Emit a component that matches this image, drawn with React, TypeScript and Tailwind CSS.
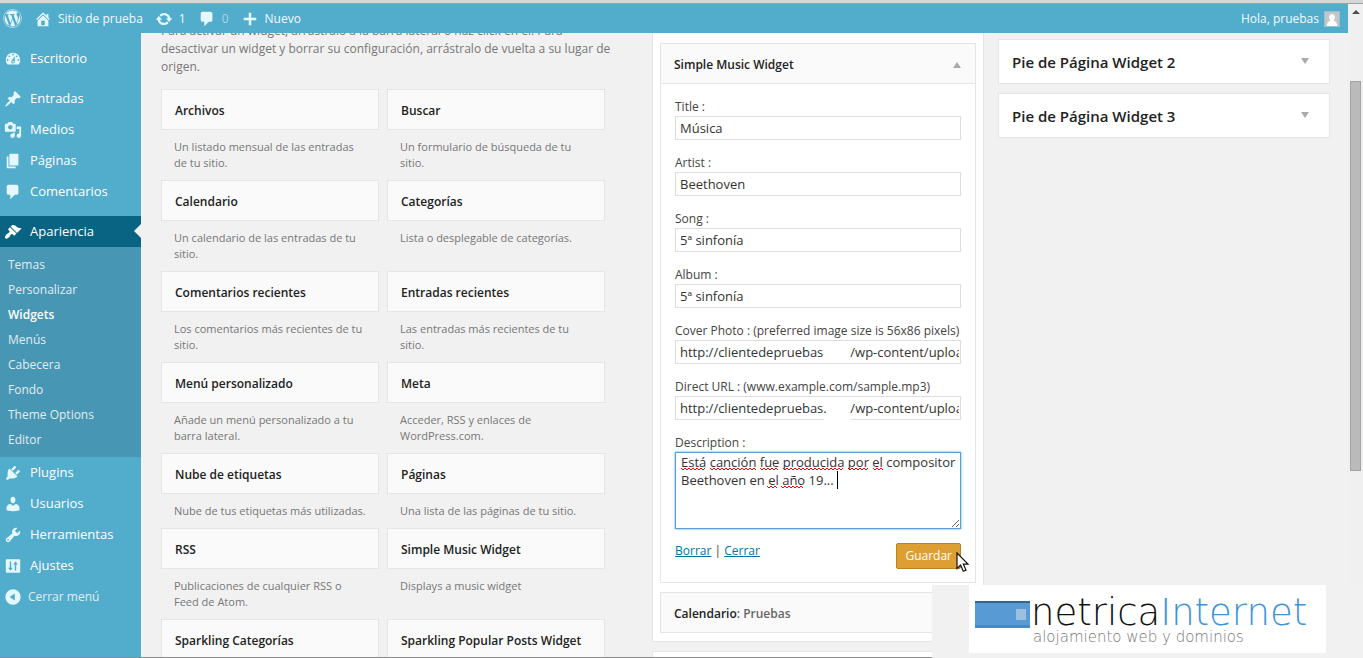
import { useState } from "react";
import type { ReactNode } from "react";
import { FaWordpress } from "react-icons/fa";

const PATHS = {
  home: "M16 8.5l1.53 1.53-1.06 1.06L10 4.6l-6.47 6.49-1.06-1.06L10 2.5l4 4v-2h2v4zm-6-2.46l6 5.99V18H4v-5.97zM12 17v-5H8v5h4z",
  update:
    "M10.2 3.28c3.53 0 6.43 2.61 6.92 6h2.08l-3.5 4-3.5-4h2.32c-.45-1.97-2.21-3.45-4.32-3.45-1.45 0-2.73.71-3.54 1.78L4.95 5.66C6.23 4.2 8.11 3.28 10.2 3.28zm-.4 13.44c-3.52 0-6.43-2.61-6.92-6H.8l3.5-4c1.17 1.33 2.33 2.67 3.5 4H5.48c.45 1.97 2.21 3.45 4.32 3.45 1.45 0 2.73-.71 3.54-1.78l1.71 1.95c-1.28 1.46-3.15 2.38-5.25 2.38z",
  plus: "M17 8.6v2.8h-5.6V17H8.6v-5.6H3V8.6h5.6V3h2.8v5.6z",
  dashboard:
    "M3.76 16h12.48c1.1-1.37 1.76-3.11 1.76-5 0-4.42-3.58-8-8-8s-8 3.58-8 8c0 1.89.66 3.63 1.76 5zM10 4c.55 0 1 .45 1 1s-.45 1-1 1-1-.45-1-1 .45-1 1-1zM6 6c.55 0 1 .45 1 1s-.45 1-1 1-1-.45-1-1 .45-1 1-1zm8 0c.55 0 1 .45 1 1s-.45 1-1 1-1-.45-1-1 .45-1 1-1zm-5.37 5.55L12 7v6c0 1.1-.9 2-2 2s-2-.9-2-2c0-.57.24-1.08.63-1.45zM4 10c.55 0 1 .45 1 1s-.45 1-1 1-1-.45-1-1 .45-1 1-1zm12 0c.55 0 1 .45 1 1s-.45 1-1 1-1-.45-1-1 .45-1 1-1zm-5 3c0-.55-.45-1-1-1s-1 .45-1 1 .45 1 1 1 1-.45 1-1z",
  post: "M10.44 3.02l1.82-1.82 6.36 6.35-1.83 1.82c-1.05-.68-2.48-.57-3.41.36l-.75.75c-.92.93-1.04 2.35-.35 3.41l-1.83 1.82-2.41-2.41-2.8 2.79c-.42.42-3.38 2.71-3.8 2.29s1.86-3.39 2.28-3.81l2.79-2.79L4.1 9.36l1.83-1.82c1.05.69 2.48.57 3.4-.36l.75-.75c.93-.92 1.05-2.35.36-3.41z",
  media:
    "M13 11V4c0-.55-.45-1-1-1h-1.67L9 1H5L3.67 3H2c-.55 0-1 .45-1 1v7c0 .55.45 1 1 1h10c.55 0 1-.45 1-1zM7 4.5c1.38 0 2.5 1.12 2.5 2.5S8.38 9.5 7 9.5 4.5 8.38 4.5 7 5.62 4.5 7 4.5zM14 6h5v10.5c0 1.38-1.12 2.5-2.5 2.5S14 17.88 14 16.5s1.12-2.5 2.5-2.5c.17 0 .34.02.5.05V9h-3V6zm-4 8.05V13h2v3.5c0 1.38-1.12 2.5-2.5 2.5S7 17.88 7 16.5 8.12 14 9.5 14c.17 0 .34.02.5.05z",
  page: "M6 15V2h10v13H6zm-1 1h8v2H3V5h2v11z",
  comments: "M5 2h9c1.1 0 2 .9 2 2v7c0 1.1-.9 2-2 2h-2l-5 5v-5H5c-1.1 0-2-.9-2-2V4c0-1.1.9-2 2-2z",
  appearance:
    "M14.48 11.06L7.41 3.99l1.5-1.5c.5-.56 2.3-.47 3.51.32 1.21.8 1.43 1.28 2.91 2.1 1.18.64 2.45 1.26 4.45.85zm-.71.71L6.7 4.7 4.93 6.47c-.39.39-.39 1.02 0 1.41l1.06 1.06c.39.39.39 1.03 0 1.42-.6.6-1.43 1.11-2.21 1.69-.35.26-.7.53-1.01.84C1.43 14.23.4 16.08 1.4 17.07c.99 1 2.84-.03 4.18-1.36.31-.31.58-.66.85-1.02.57-.78 1.08-1.61 1.69-2.21.39-.39 1.02-.39 1.41 0l1.06 1.06c.39.39 1.02.39 1.41 0z",
  plugins:
    "M13.11 4.36L9.87 7.6 8 5.73l3.24-3.24c.35-.34 1.05-.2 1.56.32.52.51.66 1.21.31 1.55zm-8 1.77l.91-1.12 9.01 9.01-1.19.84c-.71.71-2.63 1.16-3.82 1.16H6.14L4.9 17.26c-.59.59-1.54.59-2.12 0-.59-.58-.59-1.53 0-2.12l1.24-1.24v-3.88c0-1.13.4-3.19 1.09-3.89zm7.26 3.97l3.24-3.24c.34-.35 1.04-.21 1.55.31.52.51.66 1.21.31 1.55l-3.24 3.25z",
  users:
    "M10 9.25c-2.27 0-2.73-3.44-2.73-3.44C7 4.02 7.82 2 9.97 2c2.16 0 2.98 2.02 2.71 3.81 0 0-.41 3.44-2.68 3.44zm0 2.57L12.72 10c2.39 0 4.52 2.33 4.52 4.53v2.49s-3.65 1.13-7.24 1.13c-3.65 0-7.24-1.13-7.24-1.13v-2.49c0-2.25 1.94-4.48 4.47-4.48z",
  tools:
    "M16.68 9.77c-1.34 1.34-3.3 1.67-4.95.99l-5.41 6.52c-.99.99-2.59.99-3.58 0s-.99-2.59 0-3.57l6.52-5.42c-.68-1.65-.35-3.61.99-4.95 1.28-1.28 3.12-1.62 4.72-1.06l-2.89 2.89 2.82 2.82 2.86-2.87c.53 1.58.18 3.39-1.08 4.65zM3.81 16.21c.4.39 1.04.39 1.43 0 .4-.4.4-1.04 0-1.43-.39-.4-1.03-.4-1.43 0-.39.39-.39 1.03 0 1.43z",
  settings:
    "M3 2.5h14c.6 0 1 .4 1 1v13c0 .6-.4 1-1 1H3c-.6 0-1-.4-1-1v-13c0-.6.4-1 1-1zM6.4 5v7H4.5L7.2 15.2 9.9 12H8V5zM12.8 5L10.1 8.2H12V15h1.6V8.2h1.9z",
  collapse:
    "M10 1.5a8.5 8.5 0 1 1 0 17a8.5 8.5 0 1 1 0-17zm2 12.4V6.1L6.2 10z",
};

type IconName = keyof typeof PATHS;

function Icon({ name, className = "" }: { name: IconName; className?: string }) {
  return (
    <svg viewBox="0 0 20 20" fillRule="evenodd" className={`size-[18px] shrink-0 fill-current ${className}`} aria-hidden="true">
      <path d={PATHS[name]} />
    </svg>
  );
}

const TOP_MENU: { icon: IconName; label: string }[] = [
  { icon: "post", label: "Entradas" },
  { icon: "media", label: "Medios" },
  { icon: "page", label: "Páginas" },
  { icon: "comments", label: "Comentarios" },
];

const SUBMENU = ["Temas", "Personalizar", "Widgets", "Menús", "Cabecera", "Fondo", "Theme Options", "Editor"];

const BOTTOM_MENU: { icon: IconName; label: string }[] = [
  { icon: "plugins", label: "Plugins" },
  { icon: "users", label: "Usuarios" },
  { icon: "tools", label: "Herramientas" },
  { icon: "settings", label: "Ajustes" },
];

const AVAILABLE = [
  { name: "Archivos", desc: "Un listado mensual de las entradas de tu sitio." },
  { name: "Buscar", desc: "Un formulario de búsqueda de tu sitio." },
  { name: "Calendario", desc: "Un calendario de las entradas de tu sitio." },
  { name: "Categorías", desc: "Lista o desplegable de categorías." },
  { name: "Comentarios recientes", desc: "Los comentarios más recientes de tu sitio." },
  { name: "Entradas recientes", desc: "Las entradas más recientes de tu sitio." },
  { name: "Menú personalizado", desc: "Añade un menú personalizado a tu barra lateral." },
  { name: "Meta", desc: "Acceder, RSS y enlaces de WordPress.com." },
  { name: "Nube de etiquetas", desc: "Nube de tus etiquetas más utilizadas." },
  { name: "Páginas", desc: "Una lista de las páginas de tu sitio." },
  { name: "RSS", desc: "Publicaciones de cualquier RSS o Feed de Atom." },
  { name: "Simple Music Widget", desc: "Displays a music widget" },
  { name: "Sparkling Categorías", desc: "" },
  { name: "Sparkling Popular Posts Widget", desc: "" },
];

const NBSP = "\u00a0";

const FIELDS = [
  { id: "title", label: "Title :", value: "Música" },
  { id: "artist", label: "Artist :", value: "Beethoven" },
  { id: "song", label: "Song :", value: "5ª sinfonía" },
  { id: "album", label: "Album :", value: "5ª sinfonía" },
  {
    id: "cover",
    label: "Cover Photo : (preferred image size is 56x86 pixels)",
    value: `http://clientedepruebas${NBSP.repeat(8)}/wp-content/uploads`,
  },
  {
    id: "url",
    label: "Direct URL : (www.example.com/sample.mp3)",
    value: `http://clientedepruebas.${NBSP.repeat(7)}/wp-content/uploads`,
  },
];

// misspelled words: [x start, x end, y]
const SQUIGGLES = [
  [6, 30, 16],
  [35, 81, 16],
  [85, 104, 16],
  [108, 169, 16],
  [173, 194, 16],
  [198, 208, 16],
  [92, 102, 34],
  [106, 128, 34],
];

function squiggle([x1, x2, y]: number[]) {
  let d = `M${x1} ${y}`;
  for (let x = x1 + 2, i = 0; x <= x2; x += 2, i++) d += `L${x} ${i % 2 ? y : y + 2}`;
  return d;
}

function MenuItem({ icon, label }: { icon: IconName; label: string }) {
  return (
    <a href="#" className="flex h-[31px] items-center gap-2 pl-1 text-[13px] text-white">
      <Icon name={icon} className="text-[#e5f8ff]" />
      {label}
    </a>
  );
}

function AdminBar() {
  return (
    <header className="flex h-[29px] shrink-0 items-center bg-[#52accc] pr-2 pl-[3px] text-xs text-[#f2fbff]">
      <a href="#" aria-label="WordPress">
        <FaWordpress className="size-[19px] text-[#e5f8ff]" />
      </a>
      <a href="#" className="ml-3 flex items-center gap-[6px]">
        <Icon name="home" className="text-[#e5f8ff]" />
        Sitio de prueba
      </a>
      <a href="#" className="ml-3 flex items-center gap-[6px]">
        <Icon name="update" className="text-[#e5f8ff]" />1
      </a>
      <a href="#" className="ml-3 flex items-center gap-[6px]">
        <Icon name="comments" className="text-[#e5f8ff]" />
        <span className="text-[#a9d5e5]">0</span>
      </a>
      <a href="#" className="ml-3 flex items-center gap-[6px]">
        <Icon name="plus" className="text-[#e5f8ff]" />
        Nuevo
      </a>
      <a href="#" className="ml-auto flex items-center gap-[5px]">
        Hola, pruebas
        <svg viewBox="0 0 16 16" className="size-4 border border-[#8fc3d6] bg-[#c5c5c5]" aria-hidden="true">
          <path
            fill="#fff"
            d="M8 2.4c2 0 3.3 1.5 3.3 3.6 0 1.5-.6 2.9-1.6 3.7 2.6.7 4 2.3 4.3 6.3H2c.3-4 1.7-5.6 4.3-6.3-1-.8-1.6-2.2-1.6-3.7 0-2.1 1.3-3.6 3.3-3.6z"
          />
        </svg>
      </a>
    </header>
  );
}

function Sidebar() {
  return (
    <nav className="w-[141px] shrink-0 bg-[#52accc] pt-[10px]">
      <MenuItem icon="dashboard" label="Escritorio" />
      <div className="mt-[9px]">
        {TOP_MENU.map((m) => (
          <MenuItem key={m.label} {...m} />
        ))}
      </div>
      <div className="relative mt-[9px] bg-[#096484]">
        <a href="#" className="flex h-[31px] items-center gap-2 pl-1 text-[13px] text-white">
          <Icon name="appearance" />
          Apariencia
        </a>
        <span className="absolute top-2 right-0 border-y-[7px] border-r-[7px] border-y-transparent border-r-[#f1f1f1]" />
      </div>
      <ul className="bg-[#4796b3] py-[5px] text-xs text-[#e2ecf1]">
        {SUBMENU.map((s) => (
          <li key={s}>
            <a
              href="#"
              className={`flex h-[25px] items-center pl-2 ${s === "Widgets" ? "font-semibold text-white" : ""}`}
            >
              {s}
            </a>
          </li>
        ))}
      </ul>
      {BOTTOM_MENU.map((m) => (
        <MenuItem key={m.label} {...m} />
      ))}
      <button type="button" className="flex h-[31px] items-center gap-[6px] pl-1 text-xs text-[#e2ecf1]">
        <Icon name="collapse" className="text-[#e5f8ff]" />
        Cerrar menú
      </button>
    </nav>
  );
}

function WidgetTitle({ children }: { children: ReactNode }) {
  return (
    <div className="flex h-[41px] items-center justify-between border border-[#e5e5e5] bg-[#fafafa] px-[13px] pt-[2px] text-xs text-[#222]">
      {children}
    </div>
  );
}

function AvailableWidgets() {
  return (
    <section className="min-w-0 flex-1">
      <p className="-mt-[11px] -mr-3 text-xs leading-[18px] text-[#777]">
        Para activar un widget, arrástralo a la barra lateral o haz click en él. Para desactivar un widget y borrar su
        configuración, arrástralo de vuelta a su lugar de origen.
      </p>
      <div className="mt-[13px] grid grid-cols-2 gap-x-2">
        {AVAILABLE.map((w) => (
          <div key={w.name}>
            <WidgetTitle>
              <h4 className="font-semibold">{w.name}</h4>
            </WidgetTitle>
            <p className="px-[13px] py-[9px] text-[11px] leading-4 text-[#777]">{w.desc}</p>
          </div>
        ))}
      </div>
    </section>
  );
}

function MusicForm() {
  const [values, setValues] = useState<Record<string, string>>(
    Object.fromEntries(FIELDS.map((f) => [f.id, f.value]))
  );
  const [description, setDescription] = useState(
    "Está canción fue producida por el compositor Beethoven en el año 19... "
  );

  return (
    <form
      className="border border-t-0 border-[#e5e5e5] px-[14px] pt-[14px] pb-[13px] text-xs text-[#444]"
      onSubmit={(e) => e.preventDefault()}
    >
      {FIELDS.map((f) => (
        <div key={f.id} className="relative mb-[14px]">
          <label htmlFor={f.id} className="block leading-[18px]">
            {f.label}
          </label>
          <input
            id={f.id}
            type="text"
            value={values[f.id]}
            onChange={(e) => setValues({ ...values, [f.id]: e.target.value })}
            className="block h-6 w-full border border-[#ddd] bg-white pr-px pl-1 text-[13px] text-[#333] outline-none"
          />
          {f.id === "url" && <span className="absolute bottom-0 left-[149px] h-1 w-[27px] bg-white" />}
        </div>
      ))}
      <label htmlFor="description" className="block leading-[18px]">
        Description :
      </label>
      <div className="relative">
        <textarea
          id="description"
          spellCheck={false}
          value={description}
          onChange={(e) => setDescription(e.target.value)}
          className="block h-[77px] w-full overflow-hidden border border-[#5b9dd9] bg-white pl-[5px] text-[13px] leading-[18px] text-[#333] shadow-[0_0_2px_rgba(30,140,190,0.8)] outline-none"
        />
        <svg width="210" height="40" className="pointer-events-none absolute top-0 left-0" aria-hidden="true">
          {SQUIGGLES.map((s) => (
            <path key={s.join()} d={squiggle(s)} fill="none" stroke="#f00" strokeWidth="1" />
          ))}
          <path d="M162.5 19v18" stroke="#000" strokeWidth="1" />
        </svg>
      </div>
      <div className="mt-[14px] flex justify-between">
        <p className="leading-4">
          <a href="#" className="text-[#0074a2] underline">
            Borrar
          </a>{" "}
          |{" "}
          <a href="#" className="text-[#0074a2] underline">
            Cerrar
          </a>
        </p>
        <div className="relative">
          <button
            type="submit"
            className="h-[26px] rounded-xs border border-[#b98324] bg-[#dd9f34] px-2 text-xs text-white"
          >
            Guardar
          </button>
          <svg viewBox="0 0 13 21" className="absolute top-[9px] left-[60px] h-[21px] w-[13px]" aria-hidden="true">
            <path
              d="M1 1v15.5l3.6-3.4 2.7 6.2 2.7-1.2-2.7-6h4.7z"
              fill="#fff"
              stroke="#111"
              strokeWidth="1.2"
            />
          </svg>
        </div>
      </div>
    </form>
  );
}

function SidebarPanel() {
  return (
    <section className="w-[332px] shrink-0">
      <div className="border border-t-0 border-[#e5e5e5] bg-white px-[7px] pt-[10px] pb-2">
        <WidgetTitle>
          <h4 className="font-semibold">Simple Music Widget</h4>
          <svg viewBox="0 0 8 6" className="mr-px h-[6px] w-2 fill-[#aaa]" aria-hidden="true">
            <path d="M4 0l4 6H0z" />
          </svg>
        </WidgetTitle>
        <MusicForm />
        <div className="mt-[9px]">
          <WidgetTitle>
            <h4 className="font-semibold">
              Calendario<span className="text-[#666]">: Pruebas</span>
            </h4>
          </WidgetTitle>
        </div>
      </div>
      <div className="mt-[9px] h-[60px] border border-[#e5e5e5] bg-white" />
    </section>
  );
}

function FooterAreas() {
  return (
    <section className="flex w-[332px] shrink-0 flex-col gap-[9px] pt-[6px]">
      {["Pie de Página Widget 2", "Pie de Página Widget 3"].map((t) => (
        <div
          key={t}
          className="flex h-[45px] items-center justify-between border border-[#e5e5e5] bg-white pt-[2px] pr-5 pl-[13px]"
        >
          <h3 className="text-[15px] font-semibold text-[#222]">{t}</h3>
          <svg viewBox="0 0 8 6" className="mb-1 h-[6px] w-2 fill-[#aaa]" aria-hidden="true">
            <path d="M0 0h8L4 6z" />
          </svg>
        </div>
      ))}
    </section>
  );
}

function Brand() {
  return (
    <div className="absolute right-0 bottom-0 h-[73px] bg-[#f1f1f1] px-[37px]">
      <div className="flex h-[68px] w-[357px] bg-white pl-[6px]">
        <svg viewBox="0 0 55 27" className="mt-4 h-[27px] w-[55px] shrink-0" aria-hidden="true">
          <rect width="55" height="27" fill="#589bd4" />
          <rect width="55" height="2" fill="#36648b" />
          <rect y="24" width="55" height="3" fill="#3e8ccb" />
          <rect x="41" y="8" width="10" height="11" fill="#9bbfdf" />
        </svg>
        <div className="ml-px pt-[10px] font-['DejaVu_Sans',sans-serif] font-extralight whitespace-nowrap">
          <p className="text-[37px] leading-9 text-[#111]">
            netrica<span className="text-[#3e95d8]">Internet</span>
          </p>
          <p className="pl-[2px] text-[15px] leading-3 text-[#777]">alojamiento web y dominios</p>
        </div>
      </div>
    </div>
  );
}

export default function App() {
  return (
    <div className="relative flex h-screen flex-col overflow-hidden bg-[#f1f1f1] font-['Open_Sans',sans-serif]">
      <div className="h-1 shrink-0 border-b border-[#a0a0a0] bg-[#d6d6d6]" />
      <div className="flex min-h-0 flex-1">
        <div className="flex min-w-0 flex-1 flex-col">
          <AdminBar />
          <div className="flex min-h-0 flex-1">
            <Sidebar />
            <main className="flex min-w-0 flex-1 items-start overflow-hidden pr-[18px] pl-5">
              <AvailableWidgets />
              <div className="ml-[47px]">
                <SidebarPanel />
              </div>
              <div className="ml-[14px]">
                <FooterAreas />
              </div>
            </main>
          </div>
        </div>
        <div className="flex w-[15px] shrink-0 flex-col items-center bg-[#f0f0f0] pt-[6px]">
          <svg viewBox="0 0 8 4" className="h-1 w-2 fill-[#4d4d4d]" aria-hidden="true">
            <path d="M4 0l4 4H0z" />
          </svg>
          <div className="mt-[67px] h-[390px] w-[11px] border border-[#a3a3a3] bg-[#bababa]" />
        </div>
      </div>
      <div className="h-px shrink-0 bg-[#8b8b8b]" />
      <Brand />
    </div>
  );
}
